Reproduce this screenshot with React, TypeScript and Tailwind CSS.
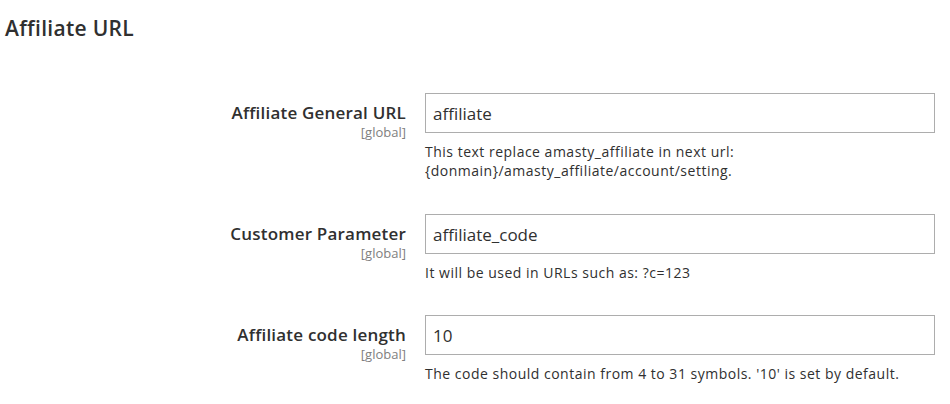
const rows = [
  {
    label: "Affiliate General URL",
    value: "affiliate",
    note: ["This text replace amasty_affiliate in next url:", "{donmain}/amasty_affiliate/account/setting."],
  },
  {
    label: "Customer Parameter",
    value: "affiliate_code",
    note: ["It will be used in URLs such as: ?c=123"],
  },
  {
    label: "Affiliate code length",
    value: "10",
    note: ["The code should contain from 4 to 31 symbols. '10' is set by default."],
  },
];

export default function App() {
  return (
    <div
      className="w-[950px] h-[404px] bg-white text-[#303030] overflow-hidden"
      style={{ fontFamily: '"Open Sans", "Noto Sans", sans-serif' }}
    >
      <h2 className="pl-[5px] pt-[14px] text-[21px] leading-[28px] font-semibold tracking-[0.3px]">
        Affiliate URL
      </h2>

      <div className="mt-[51px] flex flex-col gap-[33px]">
        {rows.map((row, i) => (
          <div key={row.label} className={i === 0 ? "flex pb-[1px]" : "flex"}>
            <div className="w-[406px] shrink-0 text-right pt-[10px]">
              <div className="text-[17px] leading-[20px] font-semibold tracking-[0.2px]">{row.label}</div>
              <div className="text-[13px] leading-[18px] text-[#808080]">[global]</div>
            </div>
            <div className="ml-[19px] w-[510px]">
              <input
                readOnly
                value={row.value}
                className="w-full h-[40px] border border-[#adadad] px-[7px] text-[17px] text-[#303030] outline-none"
              />
              <div className="mt-[9px] text-[14px] leading-[19px] tracking-[0.5px]">
                {row.note.map((line) => (
                  <div key={line}>{line}</div>
                ))}
              </div>
            </div>
          </div>
        ))}
      </div>
    </div>
  );
}
